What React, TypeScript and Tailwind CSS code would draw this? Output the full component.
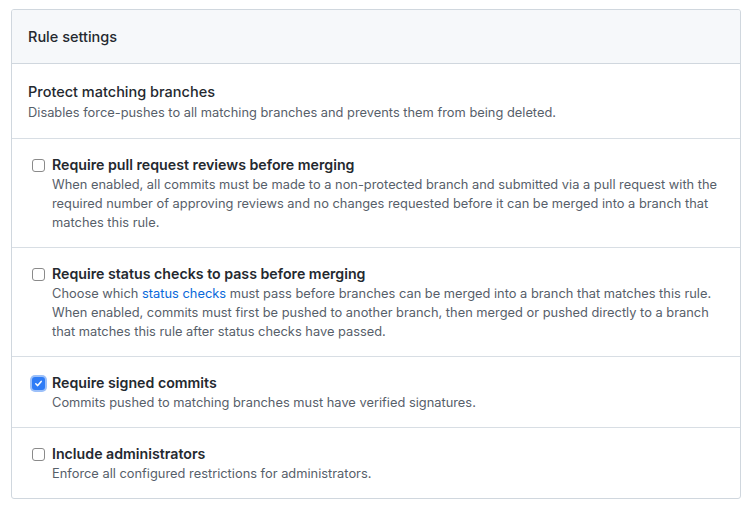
import React from "react";

function Box({ checked }: { checked?: boolean }) {
  if (checked) {
    return (
      <span className="mt-[3px] -ml-[2px] -mr-[2px] flex h-[17px] w-[17px] shrink-0 items-center justify-center rounded-[5px] bg-[#9cc0f9]">
        <span className="flex h-[13px] w-[13px] items-center justify-center rounded-[3px] bg-[#2f7cf6]">
          <svg width="9" height="9" viewBox="0 0 9 9" fill="none">
            <path d="M1.8 4.8 L3.7 6.6 L7.2 2.4" stroke="white" strokeWidth="1.5" strokeLinecap="round" strokeLinejoin="round" />
          </svg>
        </span>
      </span>
    );
  }
  return <span className="mt-[5px] h-[13px] w-[13px] shrink-0 rounded-[3px] border border-[#8a8a8a] bg-white" />;
}

function Row({ title, checked, children }: { title: string; checked?: boolean; children: React.ReactNode }) {
  return (
    <div className="flex gap-[7px] border-t border-[#d8dee4] px-[20px] pt-[15px] pb-[15px]">
      <Box checked={checked} />
      <div>
        <div className="text-[14.2px] font-semibold leading-[21px] text-[#24292f]">{title}</div>
        <div className="text-[12.85px] leading-[19px] text-[#57606a]">{children}</div>
      </div>
    </div>
  );
}

export default function App() {
  return (
    <div className="min-h-[513px] bg-white pt-[9px] pl-[11px] pr-[12px]" style={{ fontFamily: "Inter, 'Noto Sans', sans-serif" }}>
      <div className="overflow-hidden rounded-[3px] border border-[#d0d7de]">
        <div className="flex h-[54px] items-center border-b border-[#d0d7de] bg-[#f6f8fa] px-[16px] text-[14.5px] font-medium text-[#24292f]">
          Rule settings
        </div>
        <div className="px-[16px] pt-[17px] pb-[16px]">
          <div className="text-[14.5px] font-medium leading-[22px] text-[#24292f]">Protect matching branches</div>
          <div className="text-[12.85px] leading-[19px] text-[#57606a]">
            Disables force-pushes to all matching branches and prevents them from being deleted.
          </div>
        </div>
        <Row title="Require pull request reviews before merging">
          When enabled, all commits must be made to a non-protected branch and submitted via a pull request with the required number of approving reviews and no changes requested before it can be merged into a branch that matches this rule.
        </Row>
        <Row title="Require status checks to pass before merging">
          Choose which <span className="text-[#0969da]">status checks</span> must pass before branches can be merged into a branch that matches this rule. When enabled, commits must first be pushed to another branch, then merged or pushed directly to a branch that matches this rule after status checks have passed.
        </Row>
        <Row title="Require signed commits" checked>
          Commits pushed to matching branches must have verified signatures.
        </Row>
        <Row title="Include administrators">
          Enforce all configured restrictions for administrators.
        </Row>
      </div>
    </div>
  );
}
